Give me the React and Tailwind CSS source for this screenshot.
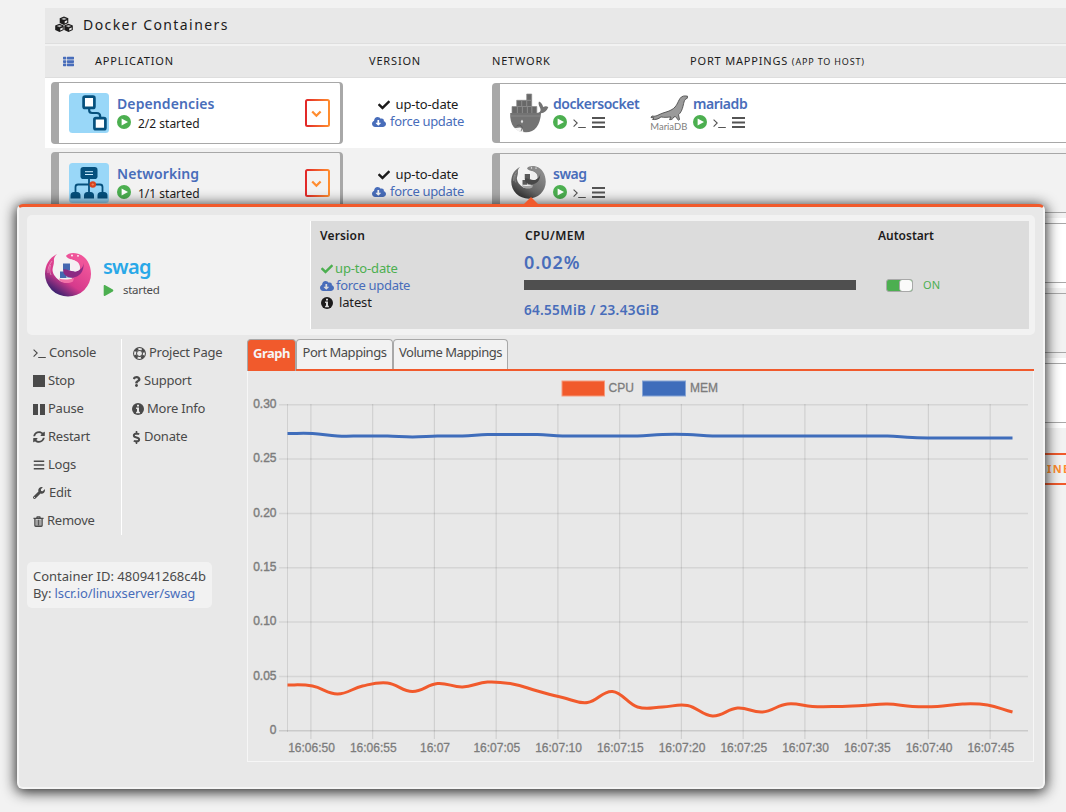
import React from "react";
import { FaThList, FaCheck, FaCloudDownloadAlt, FaBars, FaPlay, FaSyncAlt, FaWrench, FaQuestion, FaDollarSign } from "react-icons/fa";

const Terminal = ({ className }) => (
  <svg viewBox="0 0 13 11" className={className} fill="none" stroke="currentColor" strokeWidth="1.1">
    <path d="M.6 1.6l3.6 3.4L.6 8.6M5.2 9.5h7.6" />
  </svg>
);

const PlayCircle = () => (
  <svg viewBox="0 0 14 14" className="size-[14px]">
    <circle cx="7" cy="7" r="7" fill="#4caf50" />
    <path d="M4.600 3.400l6.400 3.600-6.400 3.600z" fill="#fff" />
  </svg>
);

const InfoCircle = ({ className, inner }) => (
  <svg viewBox="0 0 12 12" className={className}>
    <circle cx="6" cy="6" r="6" fill="currentColor" />
    <path d="M5 1.700h2v1.700H5zM4.100 4.500H7v4.200h.9v1.500H4.100V8.700H5V6h-.9z" fill={inner} />
  </svg>
);

const LifeRing = () => (
  <svg viewBox="0 0 14 14" className="size-[13px]" fill="none" stroke="currentColor">
    <circle cx="7" cy="7" r="6.400" strokeWidth="1.100" />
    <circle cx="7" cy="7" r="3.200" strokeWidth="1.100" />
    <circle cx="7" cy="7" r="4.900" strokeWidth="2.600" strokeDasharray="3.850 3.850" strokeDashoffset="-1.920" />
  </svg>
);

const Trash = () => (
  <svg viewBox="0 0 11 12" className="size-[11px]" fill="none" stroke="currentColor">
    <path d="M0 2.600h11M3.500 2.500l.6-1.600h2.800l.6 1.600" strokeWidth="1.400" />
    <path d="M1.600 3v7.400q0 .8.8.8h6.200q.8 0 .8-.8V3" strokeWidth="1.500" />
    <path d="M3.900 4V10.500M5.500 4V10.500M7.100 4V10.500" strokeWidth="1" />
  </svg>
);

const Cubes = () => (
  <svg viewBox="0 0 18 16" className="-mt-[3px] h-4 w-[18px]" fill="#1c1b1b">
    <path d="M9 .6l4.300 1.700v4.600L9 8.900 4.700 6.900V2.300z" />
    <path d="M4.500 7.800l4.200 1.700v4.400l-4.200 2-4.300-2V9.500z" />
    <path d="M13.500 7.800l4.300 1.700v4.400l-4.300 2-4.200-2V9.500z" />
    <path d="M6.200 2.900L9 1.800l2.800 1.100L9 4zM1.700 10.100L4.500 9l2.800 1.100-2.800 1.100zM10.700 10.100L13.500 9l2.800 1.100-2.800 1.100z" fill="#b5b5b5" />
    <path d="M9.700 5.200v2.200l2.500-1.200V4.200zM5.200 12.400v2.200l2.500-1.200v-2zM14.200 12.400v2.200l2.500-1.200v-2z" fill="#e8e8e8" />
  </svg>
);

const Whale = () => (
  <svg viewBox="0 0 40 40" className="size-10">
    <g fill="#686868" stroke="#8c8c8c" strokeWidth=".7">
      <path d="M3 13.500h5.400v7H3zM8.400 13.500h5v7h-5zM13.400 13.500h5v7h-5zM18.400 13.500h4.400v7h-4.400zM22.800 13.500h5v7h-5zM7.700 7.300h5v6.200h-5zM12.700 7.300h5v6.200h-5zM17.700 7.300h5v6.200h-5zM17.700 1h5v6.300h-5z" />
    </g>
    <path d="M1.200 20h26.500c3.500 0 4.700-2.500 3.300-5.200-1.500-2.800-1.800-5-1-6.300 2.600 1.200 3.800 3.500 4.100 5.600 2-1 4-1 5.200.2-1.500 3.800-4 5.700-7.300 5.900C31.200 32 26 39.300 17 39.300 6.500 39.300.5 32 1.200 20z" fill="#737373" />
    <path d="M1.200 23h30.400" stroke="#8f8f8f" strokeWidth=".7" />
    <path d="M5 34.500c2.500 1.500 5.500-1 8 .7l1.500 3.800C11 39.200 7.500 38 5 34.500z" fill="#f2f2f2" />
    <path d="M7.500 33q3-2.500 6 1.200M13.200 34.500l-1 3.500" stroke="#555" strokeWidth=".7" fill="none" />
    <ellipse cx="13" cy="28.500" rx="1.300" ry="2" fill="#eee" stroke="#5a5a5a" strokeWidth=".6" />
  </svg>
);

const Seal = () => (
  <svg viewBox="0 0 40 40" className="ml-px size-10">
    <path d="M37.500 3.200C34.500 2.500 31.500 3 30 5.500c-2.500 3.700-3 8-8 11-4 2.500-8 2.800-12 4.700-3 1.500-5 2.600-8 1.800l-1 1.500 3 .4-1.500 1.500c3 .6 6-.4 8.500-2.500 3.500.8 6.500.3 10 .1l-1.500 2.600c2 .3 3.700-.8 4.500-2.800l1.500-.2 3 3.700 1-.8-1-4.800c4-3.500 4.500-9 5.500-12.700.5-2 1.500-3 3.300-3.800z" fill="#9a9a9a" stroke="#4e4e4e" strokeWidth=".9" />
    <text x=".3" y="37" fontSize="9" fontFamily="Lato, sans-serif" fill="#808080" textLength="37" lengthAdjust="spacingAndGlyphs">MariaDB</text>
  </svg>
);

const Swag = ({ className, color }) => {
  const id = color ? "swagc" : "swagg";
  return (
    <svg viewBox="0 0 46 44" className={className}>
      <defs>
        <linearGradient id={id} x1=".8" y1=".2" x2=".25" y2=".95">
          <stop offset="0" stopColor={color ? "#f0559a" : "#8a8a8a"} />
          <stop offset=".6" stopColor={color ? "#d63a8c" : "#666"} />
          <stop offset="1" stopColor={color ? "#35206e" : "#333"} />
        </linearGradient>
      </defs>
      <path d="M12 1C4 5 0 12 0 21a23 22.500 0 0 0 46 0C46 11 41 3 33 .700 28-.6 23 0 21 3c1 2 3 3 6 3.500 6 1.500 8 4.500 8 8.500 0 5-4 8.500-9 8.500l2 4c-4 2-8 2-12 1C11 25 8 22 7.500 17c0-3 1.500-5 1.500-9C8.500 5 10 3 12 1z" fill={`url(#${id})`} />
      <path d="M7 8c-3 4-4.500 8-4 12M5.500 12c-1 4-1 7 .5 10" stroke={color ? "#fff" : "#ddd"} strokeWidth=".6" fill="none" opacity=".6" />
      <path d="M18 10.500h7v7h-7zM15 18.500h6.500v6.500H15zM22.300 18.500h6.500v6h-6.500z" fill={color ? "#4468b0" : "#5a5a5a"} />
      <path d="M38.500 9c.5 6-4 9-9 9.500-5-.5-9-3-11-2-1 3 1 7 7 8 9 .5 14-6 13-15.500z" fill={color ? "#8b2a83" : "#484848"} />
      <path d="M26 6.500c5 1 8.500 4 8.500 8 0 2-1.500 3.700-4 4-1-.5-2.500-1-4-1V8z" fill={color ? "#f5eef3" : "#eee"} />
      <path d="M14 25.500c4 1.500 9 1.500 15-.5l-1 3.500c-5 2.500-10 1.800-13-.8z" fill={color ? "#f271a8" : "#a5a5a5"} />
      <circle cx="27" cy="2.500" r=".9" fill="#fff" /><circle cx="33" cy="2.800" r=".9" fill="#fff" />
    </svg>
  );
};

const DepIcon = () => (
  <svg viewBox="0 0 40 40" className="size-10">
    <rect width="40" height="40" rx="3.500" fill="#99d7f8" />
    <path d="M20.200 15v2.500q0 2.500 3 2.500h4.500q3.500 0 3.500 3.500v2" fill="none" stroke="#05507d" strokeWidth="2.200" />
    <rect x="14.600" y="3.700" width="10.800" height="11.200" rx="1.500" fill="#fff" stroke="#05507d" strokeWidth="2.700" />
    <rect x="25.400" y="25.200" width="11" height="11" rx="1.500" fill="#fff" stroke="#05507d" strokeWidth="2.700" />
  </svg>
);

const NetIcon = () => (
  <svg viewBox="0 0 40 40" className="size-10">
    <rect width="40" height="40" rx="3.500" fill="#99d7f8" />
    <path d="M20 15v15M6.500 30v-6q0-2.500 2.500-2.500h22q2.500 0 2.500 2.500v6" fill="none" stroke="#05507d" strokeWidth="1.800" />
    <g fill="#05507d">
      <rect x="11.500" y="4" width="17" height="12" rx="2.800" />
      <path d="M1.500 35.500v-3q0-3.500 3.500-3.500h3q3.500 0 3.500 3.500v3zM15 35.500v-3q0-3.500 3.500-3.500h3q3.500 0 3.500 3.500v3zM28.500 35.500v-3q0-3.500 3.500-3.500h3q3.500 0 3.500 3.500v3z" />
    </g>
    <path d="M16 8.700h8M16 11.500h8" stroke="#cfeeff" strokeWidth="1" />
    <circle cx="23.800" cy="21.500" r="3.200" fill="#d9431e" />
    <path d="M22.500 21.500h2.600M23.800 20.200v2.600" stroke="#f08a5a" strokeWidth=".8" />
  </svg>
);

const Expand = () => (
  <svg viewBox="0 0 25 28" className="h-7 w-[25px]">
    <defs><linearGradient id="exp"><stop offset="0" stopColor="#e22828" /><stop offset="1" stopColor="#ff8c2f" /></linearGradient></defs>
    <rect x="1" y="1" width="23" height="26" rx="1.500" fill="none" stroke="url(#exp)" strokeWidth="2" />
    <path d="M7.200 12.500l4.200 4.200 4.200-4.200" fill="none" stroke="#ff8c2f" strokeWidth="2.300" />
  </svg>
);

const Service = ({ icon, name }) => (
  <div className="flex w-[140px]">
    <div className="flex w-[44px] shrink-0 justify-start">{icon}</div>
    <div>
      <div className="mt-px h-[19px] text-[14px] leading-[20px] font-semibold tracking-[-0.45px] text-[#486dba]">{name}</div>
      <div className="mt-px flex h-4 items-center text-[#545454]">
        <PlayCircle />
        <Terminal className="ml-[6px] mt-[3px] h-[11px] w-[13px]" />
        <svg viewBox="0 0 13 11" className="ml-[6px] mt-px h-[11px] w-[13px]"><path d="M0 1h13M0 5.500h13M0 10h13" stroke="currentColor" strokeWidth="2" /></svg>
      </div>
    </div>
  </div>
);

const Row = ({ bg, icon, name, count, children }) => (
  <div className={`flex h-[70px] pl-[6px] ${bg}`}>
    <div className="mt-1 flex h-[62px] w-[292px] shrink-0 rounded-[4px] border border-l-8 border-r-[3px] border-[#a8a8a8] pt-[10px] pl-[10px] pr-[10px]">
      {icon}
      <div className="ml-2 grow">
        <div className="h-[21px] text-[14px] leading-[22px] font-semibold tracking-[0.1px] text-[#486dba]">{name}</div>
        <div className="flex h-4 items-center">
          <PlayCircle />
          <span className="mt-[3px] ml-[7px] text-[12px] tracking-[0px]">{count}</span>
        </div>
      </div>
      <div className="mt-[6px]"><Expand /></div>
    </div>
    <div className="flex w-[149px] shrink-0 flex-col items-center pt-[18px] pl-[2px] text-[13px] leading-[17px]">
      <div className="flex items-center"><FaCheck className="mr-[6px] size-[12px]" /><span className="w-[64px] whitespace-nowrap tracking-[-0.15px]">up-to-date</span></div>
      <div className="flex items-center text-[#486dba]"><FaCloudDownloadAlt className="mr-1 size-[14px]" /><span className="w-[75px] whitespace-nowrap tracking-[-0.32px]">force update</span></div>
    </div>
    <div className="mt-[5px] flex h-[60px] grow rounded-l-[4px] border border-l-8 border-r-0 border-[#a8a8a8] pt-[9px] pl-[9px]">{children}</div>
  </div>
);

const Action = ({ icon, label, gap = "ml-[3px]" }) => (
  <div className="flex h-7 items-center">{icon}<span className={`whitespace-nowrap tracking-[-0.25px] ${gap}`}>{label}</span></div>
);

const CPU = [685, 686, 694, 686, 683, 691.5, 683.5, 687, 682, 684, 691, 697.5, 702.5, 691.5, 707, 707, 705.5, 716, 708, 712, 704, 706.5, 706.5, 705.5, 704, 706.5, 706.5, 704, 705, 712];
const MEM = [433.5, 433.5, 436, 436, 436, 437, 436, 436, 434.500, 434.500, 434.500, 436, 436, 436, 436, 434.500, 434.500, 436, 436, 436, 436, 436, 436, 436, 436, 437.500, 438, 438, 438, 438];
const TICKS = ["16:06:50", "16:06:55", "16:07", "16:07:05", "16:07:10", "16:07:15", "16:07:20", "16:07:25", "16:07:30", "16:07:35", "16:07:40", "16:07:45"];
const LEVELS = ["0.30", "0.25", "0.20", "0.15", "0.10", "0.05", "0"];

function curve(ys) {
  const step = 725 / 29;
  const p = ys.map((y, i) => [287.5 + i * step, y]);
  const slope = (i) => (i === 0 || i === p.length - 1 ? 0 : (p[i + 1][1] - p[i - 1][1]) / 2);
  let d = `M${p[0][0]} ${p[0][1]}`;
  for (let i = 1; i < p.length; i++) {
    const k = 0.4;
    const end = i === p.length - 1 ? p[i][1] - 2.5 * Math.sign(p[i][1] - p[i - 1][1]) : p[i][1] - slope(i) * k;
    d += `C${p[i - 1][0] + step * k} ${p[i - 1][1] + slope(i - 1) * k} ${p[i][0] - step * k} ${end} ${p[i][0]} ${p[i][1]}`;
  }
  return d;
}

const Chart = () => (
  <svg viewBox="248 371 785 390" className="block h-[390px] w-[785px]" fontFamily="'Liberation Sans', Arial, sans-serif" fontSize="12" fill="#7c7c7c">
    <rect x="562" y="381" width="42.500" height="15" fill="#f15a2c" stroke="#f59a7c" strokeWidth="1" />
    <text x="608.500" y="392" stroke="#7c7c7c" strokeWidth=".3">CPU</text>
    <rect x="642.500" y="381" width="43" height="15" fill="#3f6dbb" stroke="#86a4d4" strokeWidth="1" />
    <text x="690" y="392" stroke="#7c7c7c" strokeWidth=".3">MEM</text>
    {LEVELS.map((t, i) => (
      <g key={t}>
        <path d={`M279 ${404.7 + i * 54.35}H1028`} stroke="#000" strokeOpacity={i === 6 ? 0.13 : 0.08} strokeWidth="1.500" />
        <text x="276.500" y={407.7 + i * 54.4} textAnchor="end" stroke="#7c7c7c" strokeWidth=".4">{t}</text>
      </g>
    ))}
    <path d="M287.500 404V732" stroke="#000" strokeOpacity=".1" />
    {TICKS.map((t, i) => (
      <g key={t}>
        <path d={`M${310.9 + i * 61.75} 404V739`} stroke="#000" strokeOpacity=".1" strokeWidth="1.200" />
        <text x={311.5 + i * 61.75} y="752" textAnchor="middle" stroke="#7c7c7c" strokeWidth=".3">{t}</text>
      </g>
    ))}
    <path d={curve(CPU)} fill="none" stroke="#f15a2c" strokeWidth="3" />
    <path d={curve(MEM)} fill="none" stroke="#3f6dbb" strokeWidth="3" />
  </svg>
);

export default function App() {
  return (
    <div className="relative h-[812px] w-[1066px] overflow-hidden bg-[#f2f2f2] font-['Noto_Sans',sans-serif] text-[#1c1b1b]">
      <div className="ml-[45px] pt-2">
        <div className="flex h-9 items-center border-b border-[#dedede] bg-[#e8e8e8] pl-[10px]">
          <Cubes />
          <span className="-mt-[2px] ml-[10px] text-[14px] tracking-[1.42px]">Docker Containers</span>
        </div>
        <div className="mt-0.5 flex h-8 items-center border-b border-[#dedede] bg-[#e8e8e8] pl-[18px] text-[11px] tracking-[0.82px]">
          <FaThList className="size-[11px] text-[#486dba]" />
          <span className="ml-[21px] w-[274px]">APPLICATION</span>
          <span className="w-[123px]">VERSION</span>
          <span className="w-[198px]">NETWORK</span>
          <span className="whitespace-nowrap">PORT MAPPINGS <span className="text-[9px]">(APP TO HOST)</span></span>
        </div>
        <Row bg="bg-white" icon={<DepIcon />} name="Dependencies" count="2/2 started">
          <Service icon={<Whale />} name="dockersocket" />
          <Service icon={<Seal />} name="mariadb" />
        </Row>
        <Row bg="bg-[#f2f2f2]" icon={<NetIcon />} name="Networking" count="1/1 started">
          <Service icon={<Swag className="mt-[3px] ml-[2px] h-[33px] w-[35px]" />} name="swag" />
        </Row>
        <Row bg="bg-white" /><Row bg="bg-[#f2f2f2]" /><Row bg="bg-white" />
        <div className="mt-[25px] flex h-8 justify-end">
          <div className="w-[50px] overflow-hidden border-y-2 border-[#f15a2c] pl-[31px] text-[11px] leading-7 font-bold tracking-[1.400px] whitespace-nowrap text-[#ff8c2f]">INE</div>
        </div>
      </div>

      <div className="absolute top-[197px] left-[523px] z-10 size-0 border-x-8 border-b-8 border-x-transparent border-b-[#f15a2c]" />
      <div className="absolute top-[204px] left-[17px] h-[585px] w-[1028px] rounded-[6px] border-2 border-t-[3px] border-[#f5f5f5] border-t-[#f15a2c] bg-[#e8e8e8] px-2 pt-2 text-[13px] text-[#4a4a4a] shadow-[0_2px_14px_1px_#000000dd]">
        <div className="flex h-[120px] w-[1008px] rounded-[5px] bg-[#f2f2f2] py-[6px] pr-[6px]">
          <div className="flex w-[283px] pt-[32px] pl-[18px]">
            <Swag color className="h-[44px] w-[46px]" />
            <div className="ml-[12px]">
              <div className="text-[20px] leading-7 font-semibold tracking-[-0.75px] text-[#29a8e8]">swag</div>
              <div className="flex h-[18px] items-center text-[11.500px] tracking-[-0.3px]"><FaPlay className="mr-[9px] size-[11px] text-[#4caf50]" />started</div>
            </div>
          </div>
          <div className="flex grow border-l border-white bg-[#dcdcdc] pt-[6px] pl-[9px] text-[#1c1b1b]">
            <div className="w-[204px]">
              <div className="h-[17px] leading-[17px] font-semibold text-[12px] tracking-[0.15px]">Version</div>
              <div className="mt-4 leading-[17px] tracking-[-0.15px]">
                <div className="flex items-center text-[#4caf50]"><FaCheck className="mr-[2px] ml-px size-[12px]" />up-to-date</div>
                <div className="flex items-center tracking-[-0.3px] text-[#486dba]"><FaCloudDownloadAlt className="mr-[2px] size-[14px]" />force update</div>
                <div className="flex items-center"><InfoCircle inner="#dcdcdc" className="mr-[6px] ml-px size-[12px]" />latest</div>
              </div>
            </div>
            <div className="w-[353px]">
              <div className="ml-px h-[17px] leading-[17px] font-semibold text-[12px] tracking-[0.35px]">CPU/MEM</div>
              <div className="mt-[6px] text-[18px] leading-6 font-semibold tracking-[1px] text-[#486dba]">0.02%</div>
              <div className="mt-[6px] h-[10px] w-[332px] bg-[#4f4f4f]" />
              <div className="mt-[10px] text-[13.500px] leading-[20px] font-semibold tracking-[0.3px] text-[#486dba]">64.55MiB / 23.43GiB</div>
            </div>
            <div>
              <div className="ml-px h-[17px] leading-[17px] font-semibold text-[12px]">Autostart</div>
              <div className="mt-[33px] ml-[9px] flex h-[17px] items-center">
                <div className="flex h-[13px] w-[27px] justify-end rounded-[3px] border border-[#a8a8a8] bg-[#4caf50]"><div className="w-[13px] rounded-[3px] border-l border-[#a8a8a8] bg-[#fafafa]" /></div>
                <span className="ml-[10px] text-[11px] tracking-[0.2px] text-[#4caf50]">ON</span>
              </div>
            </div>
          </div>
        </div>
        <div className="flex pt-1">
          <div className="w-[220px] shrink-0">
            <div className="flex h-[196px]">
              <div className="w-[95px] border-r border-white pl-[6px]">
                <Action icon={<Terminal className="h-[11px] w-[13px]" />} label="Console" gap="ml-[3px]" />
                <Action icon={<div className="size-[12px] bg-current" />} label="Stop" />
                <Action icon={<div className="flex h-[11px] w-[12px] justify-between"><div className="w-[5px] bg-current" /><div className="w-[5px] bg-current" /></div>} label="Pause" />
                <Action icon={<FaSyncAlt className="size-[12px]" />} label="Restart" />
                <Action icon={<FaBars className="size-[12px]" />} label="Logs" />
                <Action icon={<FaWrench className="size-[12px]" />} label="Edit" gap="ml-1" />
                <Action icon={<Trash />} label="Remove" />
              </div>
              <div className="pl-[11px]">
                <Action icon={<LifeRing />} label="Project Page" />
                <Action icon={<FaQuestion className="-ml-[2px] size-[11px]" />} label="Support" gap="ml-[2px]" />
                <Action icon={<InfoCircle inner="#e8e8e8" className="-ml-px size-[12px]" />} label="More Info" gap="ml-[3px]" />
                <Action icon={<FaDollarSign className="-ml-[3px] size-[13px]" />} label="Donate" gap="ml-px" />
              </div>
            </div>
            <div className="mt-[27px] h-[46px] w-[185px] rounded-[5px] bg-[#f2f2f2] px-[6px] py-[6px] leading-[17px] whitespace-nowrap">
              <div>Container ID: 480941268c4b</div>
              <div className="tracking-[-0.1px]">By: <span className="text-[#486dba]">lscr.io/linuxserver/swag</span></div>
            </div>
          </div>
          <div className="w-[787px] shrink-0">
            <div className="flex h-8 border-b-2 border-[#f15a2c] whitespace-nowrap">
              <div className="h-8 w-[49px] rounded-t-[4px] border border-b-0 border-[#a8a8a8] bg-[#f15a2c] text-center leading-[27px] font-bold tracking-[-0.5px] text-[#f5f5f5]">Graph</div>
              <div className="h-[30px] w-[97px] rounded-t-[4px] border border-b-0 border-[#a8a8a8] bg-[#f2f2f2] text-center leading-[25px] tracking-[-0.45px]">Port Mappings</div>
              <div className="h-[30px] w-[115px] rounded-t-[4px] border border-b-0 border-[#a8a8a8] bg-[#f2f2f2] text-center leading-[25px] tracking-[-0.5px]">Volume Mappings</div>
            </div>
            <div className="h-[391px] border border-t-0 border-[#f6f6f6]"><Chart /></div>
          </div>
        </div>
      </div>
    </div>
  );
}
